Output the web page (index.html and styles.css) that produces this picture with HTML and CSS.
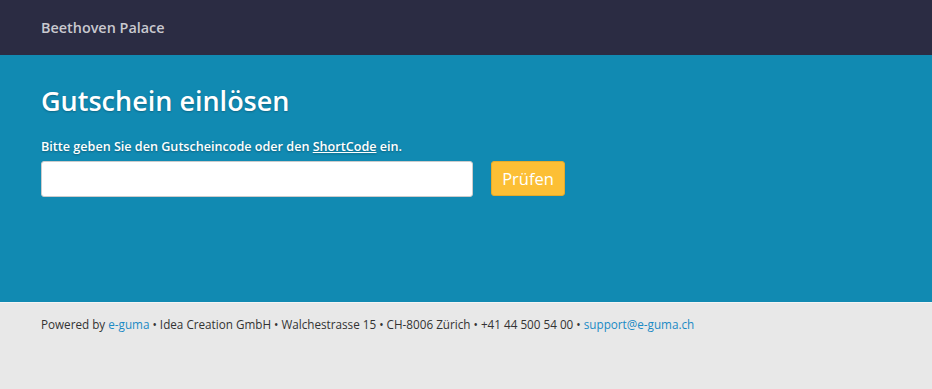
FILE: index.html
```html
<!DOCTYPE html>
<html lang="de">
<head>
<meta charset="utf-8">
<title>Gutschein einlösen</title>
<link rel="stylesheet" href="styles.css">
</head>
<body>
<header class="topbar">
  <div class="brand">Beethoven Palace</div>
</header>
<main class="hero">
  <h1 class="title">Gutschein einlösen</h1>
  <p class="label">Bitte geben Sie den Gutscheincode oder den <a href="#" class="label-link">ShortCode</a> ein.</p>
  <form class="form">
    <input class="code-input" type="text">
    <button class="btn" type="button">Prüfen</button>
  </form>
</main>
<footer class="footer">
  <p class="footer-text">Powered by <a href="#" class="flink">e-guma</a> • Idea Creation GmbH • Walchestrasse 15 • CH-8006 Zürich • +41 44 500 54 00 • <a href="#" class="flink">support@e-guma.ch</a></p>
</footer>
</body>
</html>
```
FILE: styles.css
```css
* { box-sizing: border-box; }
html, body { margin: 0; padding: 0; }
body {
  font-family: "Open Sans", "Liberation Sans", sans-serif;
  background: #e8e8e8;
}
.topbar {
  height: 55px;
  background: #2b2c43;
  display: flex;
  align-items: center;
  padding: 0 41px;
}
.brand {
  color: #c9c9cf;
  font-size: 14.4px;
  font-weight: 600;
}
.hero {
  background: #118ab2;
  height: 247px;
  padding: 27px 41px 0;
}
.title {
  margin: 0;
  color: #fff;
  font-size: 27px;
  font-weight: 600;
  line-height: 38px;
  text-shadow: 0 1px 2px rgba(0,0,0,0.25);
}
.label {
  margin: 18px 0 0;
  color: #fff;
  font-size: 12.6px;
  font-weight: 600;
  line-height: 18px;
  text-shadow: 0 1px 2px rgba(0,0,0,0.3);
}
.label-link { color: #fff; text-decoration: underline; }
.form {
  display: flex;
  align-items: flex-start;
  gap: 18px;
  margin-top: 5px;
}
.code-input {
  width: 432px;
  height: 36px;
  border: 1px solid #ccc;
  border-radius: 3px;
  background: #fff;
  font-family: inherit;
  font-size: 14px;
  padding: 0 10px;
}
.btn {
  height: 35px;
  width: 74px;
  background: #fcbf35;
  border: 1px solid #e5ab2a;
  border-radius: 3px;
  color: #fff;
  font-family: inherit;
  font-size: 16.5px;
  padding: 0;
}
.footer {
  border-top: 1px solid #f4f4f4;
  padding: 12px 41px;
}
.footer-text {
  margin: 0;
  font-size: 11.7px;
  line-height: 18px;
  color: #333;
}
.flink { color: #1a8ac5; text-decoration: none; }
```
